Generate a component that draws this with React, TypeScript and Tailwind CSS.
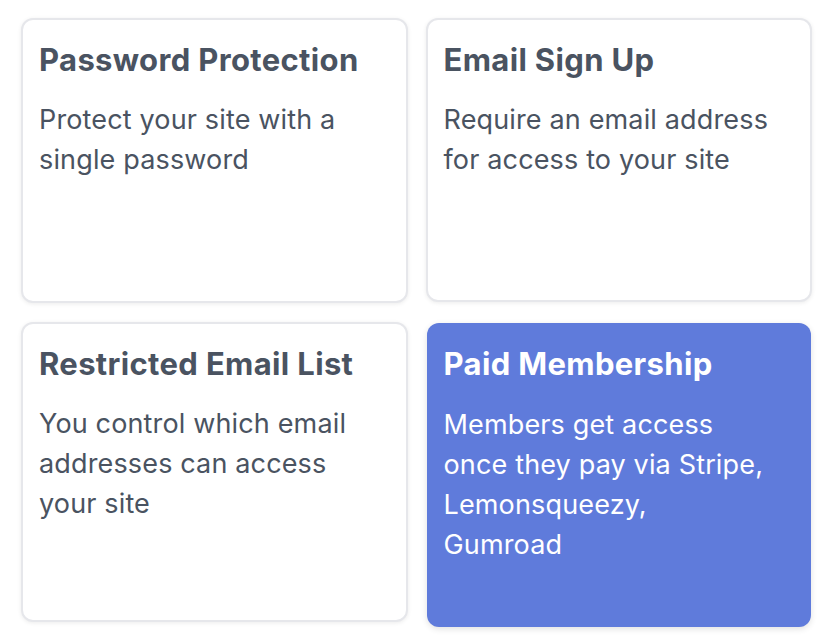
const cards = [
  {
    title: "Password Protection",
    lines: ["Protect your site with a", "single password"],
    h: "h-[285px]",
  },
  {
    title: "Email Sign Up",
    lines: ["Require an email address", "for access to your site"],
    h: "h-[284px]",
  },
  {
    title: "Restricted Email List",
    lines: ["You control which email", "addresses can access", "your site"],
    h: "h-[300px]",
  },
];

function Lines({ lines }: { lines: string[] }) {
  return (
    <>
      {lines.map((l) => (
        <span key={l} className="block whitespace-nowrap">
          {l}
        </span>
      ))}
    </>
  );
}

function Card({ title, lines, h }: { title: string; lines: string[]; h: string }) {
  return (
    <div
      className={`${h} rounded-[12px] border-2 border-[#e6e7eb] bg-white px-[16px] pt-[18px] shadow-[0_1px_4px_rgba(0,0,0,0.08)]`}
    >
      <h3 className="text-[31px] font-bold leading-[44px] tracking-[0.35px] text-[#4a5361]">{title}</h3>
      <p className="mt-[18px] text-[27px] leading-[40px] tracking-[0.15px] text-[#4a5361]">
        <Lines lines={lines} />
      </p>
    </div>
  );
}

export default function App() {
  return (
    <div
      className="w-[833px] h-[642px] bg-white px-[21px] pt-[18px]"
      style={{ fontFamily: "Inter, 'Noto Sans', sans-serif" }}
    >
      <div className="grid grid-cols-2 gap-x-[18px] gap-y-[19px] items-start">
        {cards.map((c) => (
          <Card key={c.title} {...c} />
        ))}
        <div className="mx-[1px] mt-[1px] h-[304px] rounded-[12px] bg-[#5f7bdb] px-[17px] pt-[19px] shadow-[0_2px_6px_rgba(0,0,0,0.12)]">
          <h3 className="text-[31px] font-bold leading-[44px] tracking-[0.35px] text-white">Paid Membership</h3>
          <p className="mt-[19px] text-[27px] leading-[40px] tracking-[0.15px] text-white">
            <Lines lines={["Members get access", "once they pay via Stripe,", "Lemonsqueezy,", "Gumroad"]} />
          </p>
        </div>
      </div>
    </div>
  );
}
